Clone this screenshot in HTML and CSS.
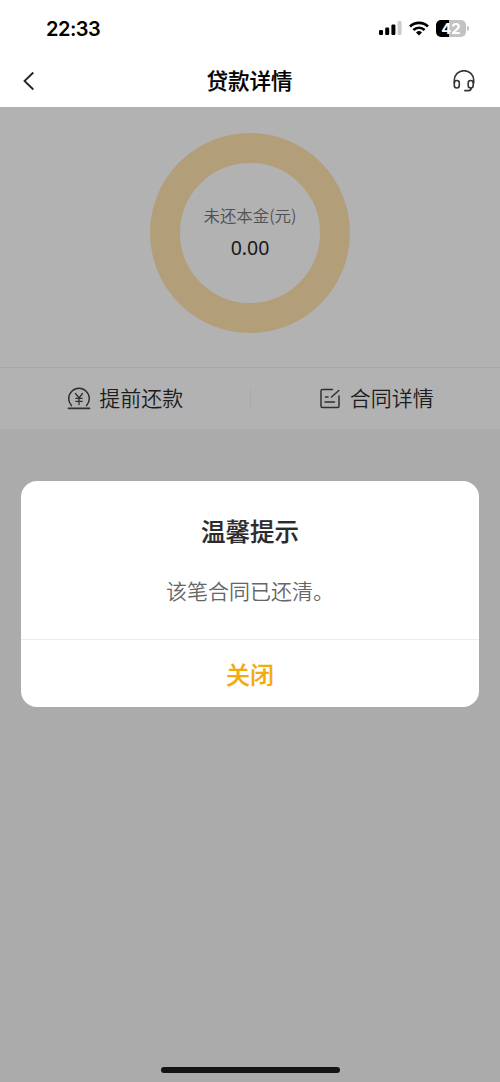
FILE: index.html
```html
<!DOCTYPE html>
<html lang="zh-CN">
<head>
<meta charset="utf-8">
<title>贷款详情</title>
<link rel="stylesheet" href="styles.css">
</head>
<body>
<div class="screen">
  <div class="status">
    <span class="time">22:33</span>
    <div class="indicators">
      <svg class="signal" width="23" height="14" viewBox="0 0 23 14"><rect x="0" y="9" width="4" height="5" rx="1.2"/><rect x="6.2" y="6.5" width="4" height="7.5" rx="1.2"/><rect x="12.4" y="3.5" width="4" height="10.5" rx="1.2"/><rect x="18.6" y="0" width="4" height="14" rx="1.2" fill="#ccc"/></svg>
      <svg class="wifi" width="20" height="15" viewBox="0 0 20 15" fill="none" stroke="#000" stroke-width="2.6"><path d="M1 5.5a13 13 0 0 1 18 0M4.4 9a8 8 0 0 1 11.2 0"/><path d="M10 14.6l-3-3.1a4.4 4.4 0 0 1 6 0z" fill="#000" stroke="none"/></svg>
      <div class="battery"><span class="level">42</span><i class="cap"></i></div>
    </div>
  </div>
  <header class="nav">
    <svg width="12" height="20" viewBox="0 0 12 20" fill="none" stroke="#222" stroke-width="1.8"><path d="M10.3 1.5L1.5 10l8.8 8.5"/></svg>
    <h1 class="title">贷款详情</h1>
    <svg width="22" height="22" viewBox="0 0 22 22" fill="none" stroke="#333" stroke-width="1.6" stroke-linecap="round"><path d="M1.3 13V10a9.700 9.300 0 0 1 19.400 0v3"/><rect x="1.3" y="10.5" width="5" height="7.500" rx="2.5"/><rect x="15.200" y="10.5" width="5" height="7.500" rx="2.5"/><path d="M18.2 18c0 1.800-1.200 2.600-2.800 2.600h-3.600"/></svg>
  </header>
  <main class="content">
    <section class="summary">
      <div class="ring">
        <span class="label">未还本金(元)</span>
        <span class="amount">0.00</span>
      </div>
    </section>
    <section class="actions">
      <div class="action">
        <svg width="24" height="24" viewBox="0 0 24 24" fill="none" stroke="#303030" stroke-width="1.5" stroke-linecap="round"><path d="M4.400 18.600A10.300 10.300 0 1 1 19.600 18.600"/><path d="M1.500 21.300h21" stroke-width="1.7"/><path d="M8.500 6.500L12 11l3.500-4.500M12 11v6.500M8.800 11.300h6.400M8.800 14.300h6.400" stroke-width="1.300"/></svg>
        <span class="action-name">提前还款</span>
      </div>
      <i class="divider"></i>
      <div class="action">
        <svg width="24" height="24" viewBox="0 0 24 24" fill="none" stroke="#303030" stroke-width="1.5" stroke-linecap="round"><path d="M14.500 2.500H4.500a1.500 1.500 0 0 0-1.500 1.500v15a1.500 1.500 0 0 0 1.500 1.500h15a1.500 1.500 0 0 0 1.500-1.500V9"/><path d="M20.800 3.500L13.500 10M7.500 10h2.500M7 15h9.500"/></svg>
        <span class="action-name">合同详情</span>
      </div>
    </section>
  </main>
  <div class="home-bar"></div>
  <div class="dialog" role="dialog">
    <h2 class="dialog-title">温馨提示</h2>
    <p class="dialog-text">该笔合同已还清。</p>
    <button class="dialog-close">关闭</button>
  </div>
</div>
</body>
</html>
```
FILE: styles.css
```css
* { box-sizing: border-box; }
body { margin: 0; font-family: "Noto Sans CJK SC", sans-serif; }
.screen { position: relative; display: flex; flex-direction: column; height: 1082px; background: #ababab; overflow: hidden; }
.status { display: flex; justify-content: space-between; align-items: center; height: 56px; padding: 0 32px 0 46px; background: #fff; }
.time { padding-top: 1px; font: 600 20px/24px Inter, sans-serif; letter-spacing: -0.5px; }
.indicators { display: flex; align-items: center; gap: 7px; }
.battery { position: relative; width: 30px; height: 17px; margin-right: 2px; border-radius: 5px; background: linear-gradient(90deg, #000 13px, #c2c2c2 13px); text-align: center; }
.level { display: block; color: #fff; font: 700 15px/17px Inter, sans-serif; }
.cap { position: absolute; left: 31px; top: 6px; width: 2px; height: 5px; border-radius: 0 2px 2px 0; background: #c2c2c2; }
.nav { display: flex; justify-content: space-between; align-items: center; height: 51px; padding: 0 25px 2px 23px; background: #fff; }
.title { margin: 0; padding: 0 0 2px 11px; font-size: 21.500px; line-height: 32px; font-weight: 500; color: #000; -webkit-text-stroke: 0.2px #000; }
.content { flex: 1; }
.summary { height: 261px; padding-top: 26px; background: #b2b2b2; border-bottom: 1px solid #a7a7a7; }
.ring { display: flex; flex-direction: column; align-items: center; width: 200px; height: 200px; margin: 0 auto; padding-top: 39px; border: 30px solid #b39e7a; border-radius: 50%; }
.label { font-size: 16.400px; line-height: 26px; font-weight: 350; color: #505050; white-space: nowrap; }
.amount { margin-top: 5px; font: 400 19.500px/30px "Noto Sans", sans-serif; color: #181818; }
.actions { display: flex; align-items: center; height: 61px; background: #b2b2b2; }
.action { display: flex; flex: 1; align-items: center; justify-content: center; gap: 8px; padding-left: 1px; font-size: 21px; line-height: 30px; font-weight: 350; color: #1c1c1c; }
.action-name { padding-bottom: 3px; }
.divider { width: 1px; height: 22px; background: #aaa; }
.home-bar { width: 179px; height: 6px; margin: 0 auto 9px; border-radius: 3px; background: #141414; }
.dialog { position: absolute; left: 21px; top: 481px; width: 458px; height: 226px; border-radius: 16px; background: #fff; text-align: center; overflow: hidden; }
.dialog-title { margin: 32px 0 0; font-size: 24.500px; line-height: 36px; font-weight: 500; color: #2b2b2b; -webkit-text-stroke: 0.2px #2b2b2b; }
.dialog-text { margin: 25px 0 0; font-size: 21px; line-height: 32px; font-weight: 350; color: #666; }
.dialog-close { display: block; width: 100%; height: 68px; margin-top: 33px; padding: 0; border: 0; border-top: 1px solid #ececec; background: none; font: 500 24px/36px "Noto Sans CJK SC", sans-serif; color: #f4aa0b; -webkit-text-stroke: 0.2px #f4aa0b; }
```
